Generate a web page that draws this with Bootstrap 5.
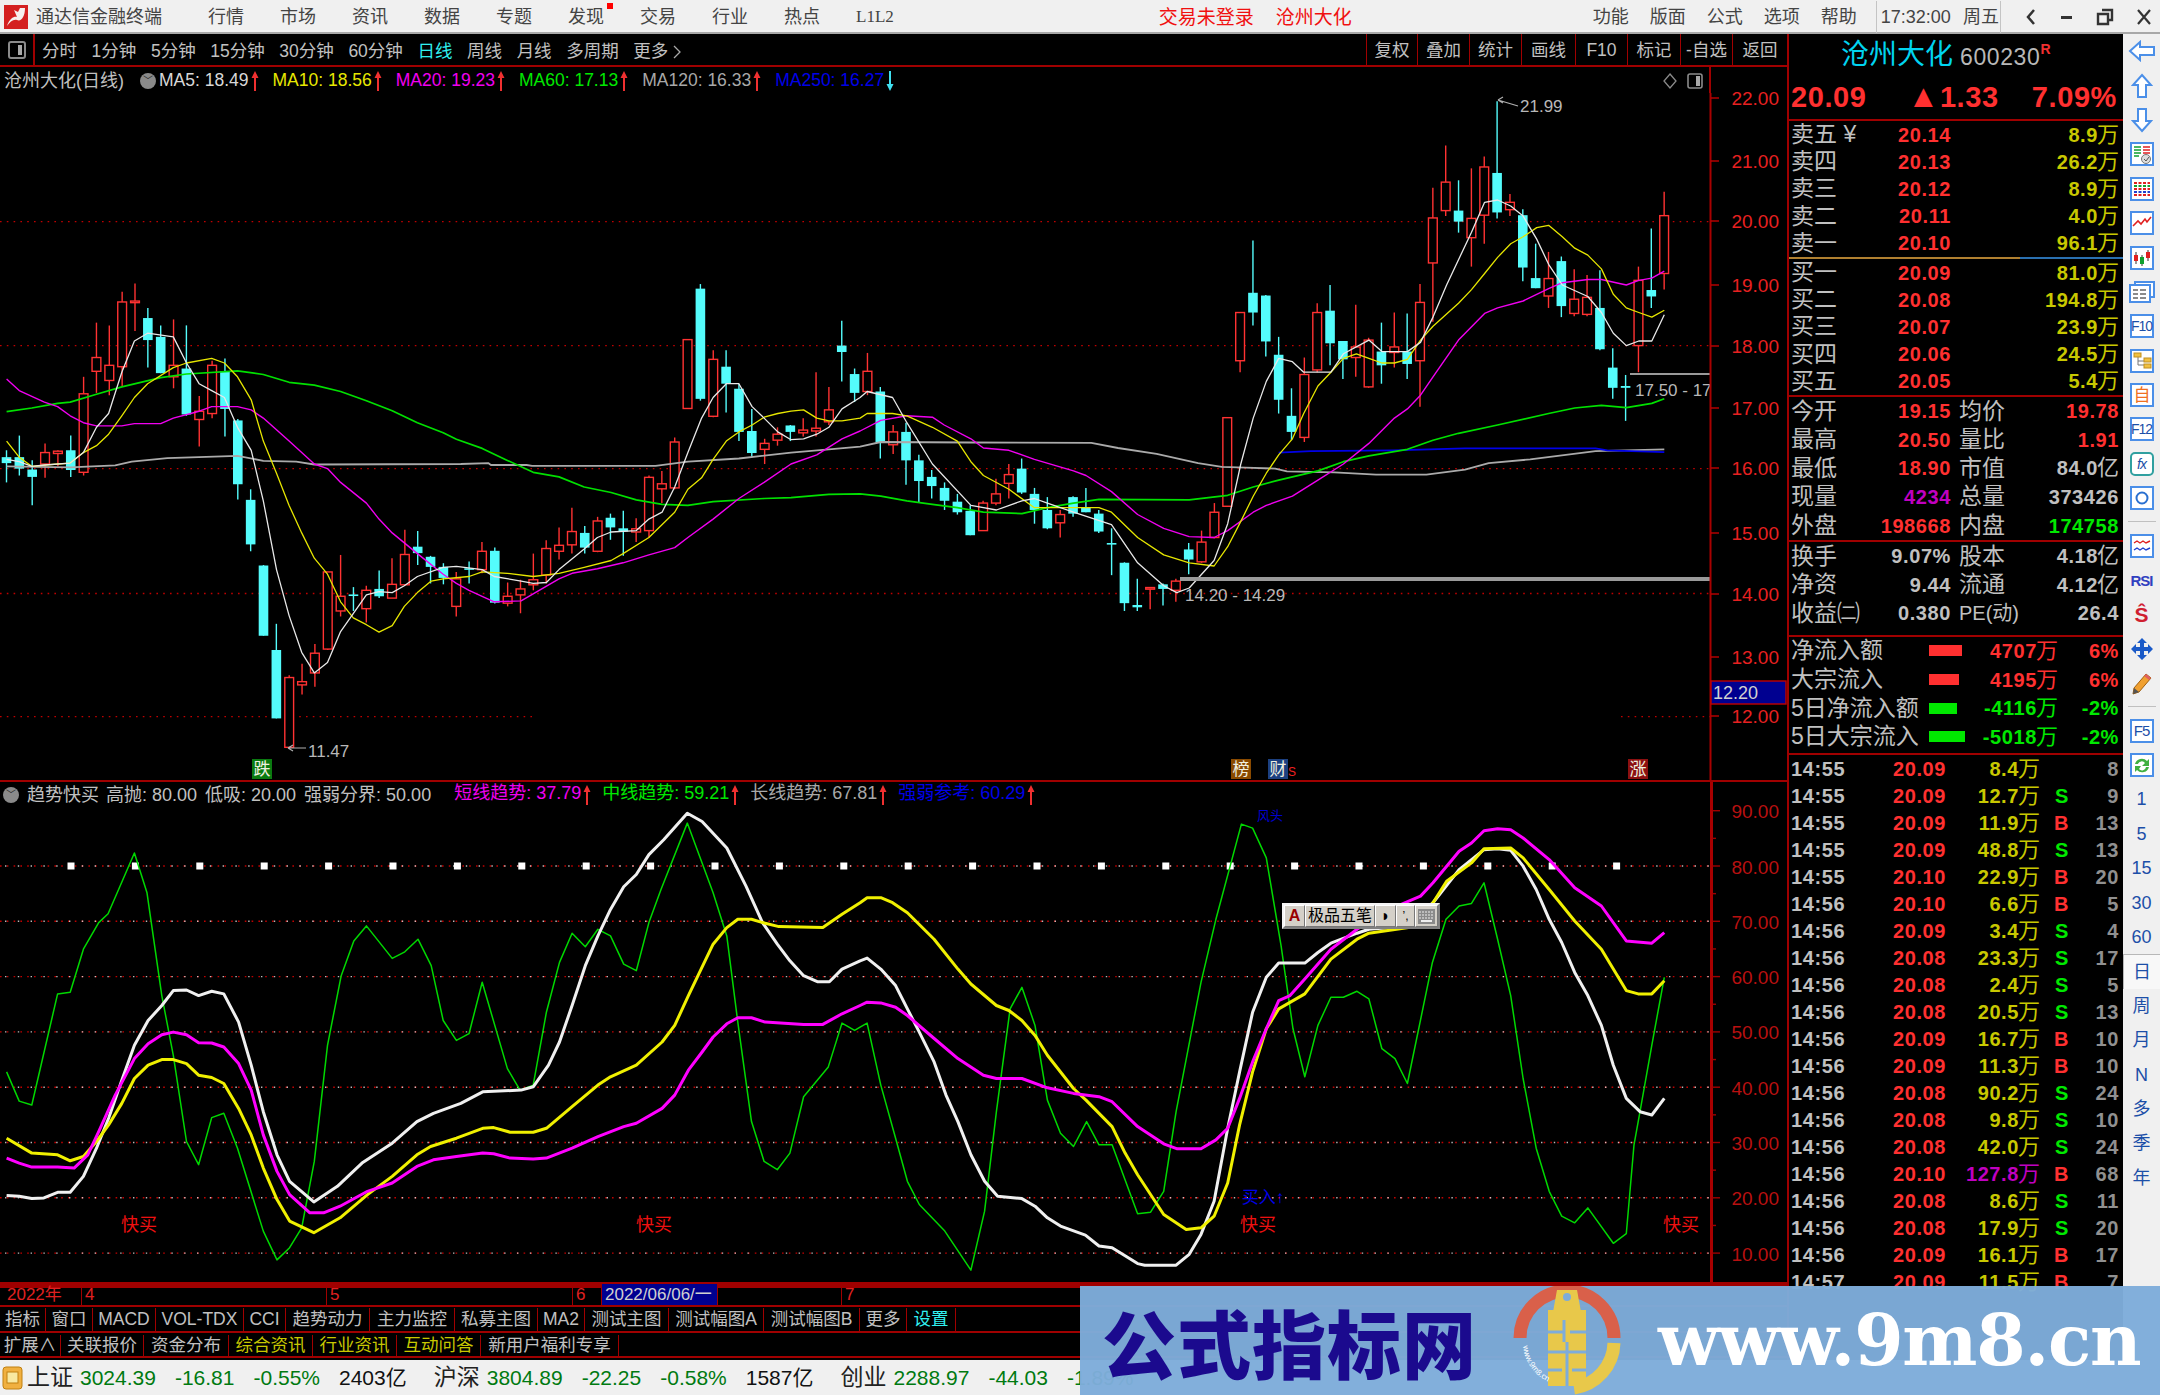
<!DOCTYPE html>
<html lang="zh-CN">
<head>
<meta charset="UTF-8">
<title>通达信金融终端</title>
<link href="https://cdn.jsdelivr.net/npm/bootstrap@5.3.0/dist/css/bootstrap.min.css" rel="stylesheet">
<style>
body { width:2160px; height:1395px; overflow:hidden; background:#000; color:#c0c0c0; font-family:"Liberation Sans","Noto Sans CJK SC",sans-serif; font-size:17px; line-height:1; }
/* title bar */
.title-bar { height:34px; background:#f0f0f0; border-bottom:2px solid #a8a8a8; color:#444; font-size:18px; padding-top:2px; }
.app-logo { margin:0 8px 0 4px; }
.app-name { width:172px; color:#444; white-space:nowrap; }
.menu-group { gap:36px; }
.menu-dot { position:absolute; width:6px; height:6px; background:#f00; top:-5px; right:-9px; }
.menu-l12 { font-family:"Liberation Serif",serif; font-size:17px; }
.login-note { margin-left:265px; color:#f01010; gap:22px; font-size:19px; }
.right-menu { margin-left:241px; gap:21px; }
.clock-box { margin-left:19px; height:32px; padding:0 1px 0 4px; width:125px; border:solid #c4c4c4; border-width:0 1px; gap:12px; font-size:18px; white-space:nowrap; flex:none; }
.win-ctrl { margin-left:23px; gap:22px; }
/* tab rows */
.left-col { width:1787px; }
.tab-row { height:33px; border-bottom:2px solid #a00000; font-size:17.5px; color:#c0c0c0; }
.tab-icon { width:35px; height:31px; border-right:2px solid #a00000; }
.tab-list { gap:14.6px; padding:4px 0 0 7px; }
.tab-on { color:#30f0f0; }
.tab-btn { height:31px; border-left:1px solid #a00000; padding-top:3px; }
.legend-row { height:26px; font-size:17.5px; }
.legend-left { width:1711px; border-right:2px solid #a00000; padding:2px 0 0 4px; height:26px; }
.legend-name { width:121px; white-space:nowrap; font-size:18px; }
.round-tag { width:16px; height:16px; border-radius:50%; background:#8a8a8a; color:#222; font-size:10px; margin:0 3px 0 15px; }
.lg-item { white-space:nowrap; }
.lg-arrow { margin-left:2px; vertical-align:middle; }
.c-white { color:#d8d8d8; } .c-yellow { color:#e8e800; } .c-pink { color:#f000f0; } .c-green { color:#00e800; } .c-gray { color:#a8a8a8; } .c-blue { color:#0000e8; }
.osc-head { height:25px; border-top:2px solid #a00000; font-size:18px; }
.osc-left { width:1713px; height:100%; border-right:3px solid #a80000; padding-top:2px; }
.osc-box { height:477px; }
svg text { font-family:"Liberation Sans","Noto Sans CJK SC",sans-serif; }
.date-row { height:23px; border-top:2px solid #a00000; font-size:17px; color:#e02020; background:linear-gradient(#a00000,#a00000) 0 0/1px 4px repeat-x; background-size:1px 4px; }
.date-cell { border-left:1px solid #a00000; padding-left:3px; height:21px; }
.date-on { background:#000090; color:#d0d0d0; white-space:nowrap; }
.cell-row { height:26px; border-top:2px solid #a00000; font-size:17.5px; color:#c0c0c0; padding-top:1px; }
.cell-row:last-of-type { height:27px; border-bottom:2px solid #a00000; padding-top:2px; }
.cell-item { border-right:1px solid #a00000; white-space:nowrap; height:100%; }
.cell-yel { color:#c8c800; } .cell-cyan { color:#30f0f0; }
/* right panel */
.quote-panel { width:336px; border-left:2px solid #a00000; padding:0 4px 0 2px; overflow:hidden; font-weight:700; font-size:20px; letter-spacing:.6px; }
.q-name-row { height:42px; padding-left:50px; }
.q-name { font-size:28px; color:#00d4f0; font-weight:400; letter-spacing:0; }
.q-code { font-size:23px; color:#b8b8b8; margin-left:7px; font-weight:400; margin-top:4px; }
.q-r { color:#f03030; font-size:14px; margin:-12px 0 0 0; }
.q-price-row { height:43px; font-size:29px; color:#ff3030; padding-right:2px; }
.q-tri { font-size:32px; line-height:0; }
.q-line { height:2px; background:#a00000; margin:0 -4px 0 -2px; flex:none; }
.q-mid { height:2px; margin:0 -4px 0 -2px; background:linear-gradient(90deg,#b08030 0,#b08030 231px,#2a70b0 231px); flex:none; }
.q-label { font-weight:400; font-size:23px; letter-spacing:0; color:#c0c0c0; white-space:nowrap; }
.q-label-pe { font-size:20px; }
.q-wan { font-weight:400; font-size:22px; letter-spacing:0; margin-left:-1px; }
.q-red { color:#ff3030; } .q-yel { color:#c8c800; } .q-grn { color:#00e800; } .q-mag { color:#c000c0; } .q-gry { color:#c0c0c0; }
.order-row { height:27.2px; display:grid; grid-template-columns:160px 1fr; align-items:center; }
.stat-row { height:28.6px; display:grid; grid-template-columns:160px 1fr; column-gap:8px; align-items:center; }
.stat-pad { padding-bottom:7px; }
.flow-pad { padding-bottom:2px; }
.flow-row { height:28.6px; display:grid; grid-template-columns:138px 129px 1fr; align-items:center; }
.flow-bar { height:11px; display:block; }
.tick-row { height:27px; display:grid; grid-template-columns:155px 94px 30px 1fr; align-items:center; flex:none; }
.tick-side { text-align:right; padding-right:1px; }
.tick-cnt { color:#909090; text-align:right; }
/* right toolbar */
.tool-bar { width:37px; background:#f0f0f0; margin-left:0; flex:none; color:#1c4fa8; font-size:18px; }
.tool-item { height:34.4px; flex:none; }
.tool-sep { height:13px; flex:none; }
.tool-sep::after { content:""; display:block; height:1px; background:#c0c0c0; width:28px; margin:6px auto 0; }
.tool-box { width:24px; height:24px; border:2px solid #4b8fe8; background:#fff; font-size:14px; color:#1c4fa8; letter-spacing:-1px; }
.tool-on { background:#f8f8f8; border:solid #b8b8b8; border-width:1px 0 0 1px; }
/* status bar */
.status-bar { height:35px; background:#f0f0f0; font-size:21px; color:#007a10; white-space:nowrap; overflow:hidden; }
.st-name { font-size:23px; color:#222; margin:0 7px 0 8px; }
.st-first { margin-left:2px; }
.st-amt { color:#111; }
.st-num { margin-right:19px; }
/* input method popup and watermark lie over the chart */
.ime-bar { position:absolute; left:1282px; top:98px; width:158px; height:26px; background:#d4d0c8; border:2px solid #f4f4f4; border-right-color:#808080; border-bottom-color:#808080; color:#000; font-size:16px; }
.ime-cell { border:1px solid; border-color:#fff #777 #777 #fff; height:100%; }
.wm-band { position:absolute; left:1080px; top:1286px; width:1080px; height:109px; background:rgba(126,172,218,.97); }
.wm-title { font-size:74px; font-weight:900; color:#1b0a8e; margin-left:22px; white-space:nowrap; letter-spacing:1px; font-family:"Noto Sans CJK SC",sans-serif; width:396px; }
.wm-logo { margin-left:14px; }
.wm-url { font-family:"DejaVu Serif",serif; font-weight:700; font-size:71px; color:#fff; margin-left:36px; white-space:nowrap; letter-spacing:-1.2px; }
</style>
</head>
<body class="position-relative d-flex flex-column">

<div class="title-bar d-flex align-items-center flex-none">
  <svg class="app-logo" width="24" height="24" viewBox="0 0 24 24"><rect width="24" height="24" fill="#d42020"/><path d="M3 21 C6 12 11 11 13 12 L10 5 L14 7 L16 3 L21 3 C21 12 17 17 13 15 C9 14 6 17 3 21Z" fill="#f6f0ee"/></svg>
  <span class="app-name">通达信金融终端</span>
  <div class="d-flex menu-group">
    <span>行情</span><span>市场</span><span>资讯</span><span>数据</span><span>专题</span>
    <span class="position-relative">发现<i class="menu-dot"></i></span>
    <span>交易</span><span>行业</span><span>热点</span><span class="menu-l12">L1L2</span>
  </div>
  <div class="d-flex login-note"><span>交易未登录</span><span>沧州大化</span></div>
  <div class="d-flex right-menu"><span>功能</span><span>版面</span><span>公式</span><span>选项</span><span>帮助</span></div>
  <div class="d-flex align-items-center clock-box"><span>17:32:00</span><span>周五</span></div>
  <div class="d-flex align-items-center win-ctrl">
    <svg width="14" height="20" viewBox="0 0 14 20"><path d="M10 3 L4 10 L10 17" fill="none" stroke="#333" stroke-width="2.5"/></svg>
    <svg width="14" height="20" viewBox="0 0 14 20"><rect x="1" y="9" width="11" height="3" fill="#333"/></svg>
    <svg width="18" height="20" viewBox="0 0 18 20"><path d="M6 3h10v10h-3M2 7h10v10H2z" fill="none" stroke="#333" stroke-width="2.4"/></svg>
    <svg width="16" height="20" viewBox="0 0 16 20"><path d="M2 3 L14 17 M14 3 L2 17" stroke="#333" stroke-width="2.2"/></svg>
  </div>
</div>

<div class="d-flex" style="height:1326px">
  <div class="left-col d-flex flex-column flex-none">
    <div class="tab-row d-flex align-items-center">
      <div class="tab-icon d-flex align-items-center justify-content-center">
        <svg width="18" height="18" viewBox="0 0 18 18"><rect x="1" y="1" width="16" height="16" rx="2" fill="none" stroke="#8a8a8a" stroke-width="2"/><rect x="10" y="4" width="4" height="10" fill="#a8a8a8"/></svg>
      </div>
      <div class="tab-list d-flex">
        <span>分时</span><span>1分钟</span><span>5分钟</span><span>15分钟</span><span>30分钟</span><span>60分钟</span><span class="tab-on">日线</span><span>周线</span><span>月线</span><span>多周期</span>
        <span class="d-flex align-items-center" style="gap:5px">更多<svg width="8" height="14" viewBox="0 0 8 14"><path d="M1 1l6 6-6 6" fill="none" stroke="#a8a8a8" stroke-width="1.3"/></svg></span>
      </div>
      <div class="ms-auto d-flex" id="tabRight"></div>
    </div>
    <div class="legend-row d-flex">
      <div class="legend-left d-flex align-items-center">
        <span class="legend-name">沧州大化(日线)</span>
        <span class="round-tag d-flex align-items-center justify-content-center">﹀</span>
        <div class="d-flex" id="legendMain" style="gap:14px"></div>
        <div class="ms-auto d-flex align-items-center" style="gap:10px;margin-right:6px">
          <svg width="14" height="16" viewBox="0 0 14 16"><path d="M7 1 L13 8 L7 15 L1 8Z" fill="none" stroke="#8a8a8a" stroke-width="1.3"/></svg>
          <svg width="16" height="16" viewBox="0 0 16 16"><rect x="1" y="1" width="14" height="14" rx="2" fill="none" stroke="#8a8a8a" stroke-width="1.6"/><rect x="9" y="3" width="4" height="10" fill="#a8a8a8"/></svg>
        </div>
      </div>
    </div>
    <svg id="priceChart" width="1787" height="687" viewBox="0 93 1787 687" class="d-block flex-none overflow-visible"></svg>
    <div class="osc-head d-flex">
      <div class="osc-left d-flex align-items-center">
        <span class="round-tag d-flex align-items-center justify-content-center" style="margin:0 8px 0 3px">﹀</span>
        <span>趋势快买</span>
        <span style="margin-left:7px">高抛: 80.00</span>
        <span style="margin-left:8px">低吸: 20.00</span>
        <span style="margin-left:8px">强弱分界: 50.00</span>
        <div class="d-flex" id="legendOsc" style="gap:11px;margin-left:23px"></div>
      </div>
    </div>
    <div class="osc-box position-relative flex-none">
      <svg id="oscChart" width="1787" height="477" viewBox="0 805 1787 477" class="d-block overflow-visible"></svg>
      <div class="ime-bar d-flex align-items-stretch">
        <span class="ime-cell d-flex align-items-center justify-content-center" style="width:21px;color:#900;font-weight:700">A</span>
        <span class="ime-cell d-flex align-items-center justify-content-center" style="width:70px;white-space:nowrap">极品五笔</span>
        <span class="ime-cell d-flex align-items-center justify-content-center" style="width:21px">◗</span>
        <span class="ime-cell d-flex align-items-center justify-content-center" style="width:19px;font-size:12px">’,</span>
        <span class="ime-cell d-flex align-items-center justify-content-center flex-grow-1">
          <svg width="17" height="15" viewBox="0 0 17 15"><rect width="17" height="15" fill="#8a8a8a"/><path d="M1 3h15M1 6h15M1 9h15" stroke="#eee" stroke-dasharray="2 1"/><rect x="3" y="11" width="11" height="2" fill="#eee"/></svg>
        </span>
      </div>
    </div>
    <div class="date-row d-flex flex-none" id="dateRow"></div>
    <div class="cell-row d-flex flex-none" id="cellRowA"></div>
    <div class="cell-row d-flex flex-none" id="cellRowB"></div>
  </div>

  <div class="quote-panel d-flex flex-column flex-none">
    <div class="q-name-row d-flex align-items-center"><span class="q-name">沧州大化</span><span class="q-code">600230</span><span class="q-r">R</span></div>
    <div class="q-price-row d-flex align-items-center justify-content-between"><span>20.09</span><span style="margin-left:8px"><span class="q-tri">▲</span>1.33</span><span>7.09%</span></div>
    <div class="q-line"></div>
    <div id="sellRows"></div>
    <div class="q-mid"></div>
    <div id="buyRows"></div>
    <div class="q-line"></div>
    <div id="statRowsA"></div>
    <div class="q-line"></div>
    <div id="statRowsB" class="stat-pad"></div>
    <div class="q-line"></div>
    <div id="flowRows" class="flow-pad"></div>
    <div class="q-line"></div>
    <div id="tickRows" class="d-flex flex-column"></div>
  </div>

  <div class="tool-bar d-flex flex-column align-items-center">
    <div class="tool-item d-flex align-items-center justify-content-center"><svg width="28" height="22" viewBox="0 0 28 22"><path d="M2 11 L12 2 V7 H26 V15 H12 V20Z" fill="#fff" stroke="#4b8fe8" stroke-width="2"/></svg></div>
    <div class="tool-item d-flex align-items-center justify-content-center"><svg width="22" height="26" viewBox="0 0 22 26"><path d="M11 2 L20 12 H15 V24 H7 V12 H2Z" fill="#fff" stroke="#4b8fe8" stroke-width="2"/></svg></div>
    <div class="tool-item d-flex align-items-center justify-content-center"><svg width="22" height="26" viewBox="0 0 22 26"><path d="M11 24 L20 14 H15 V2 H7 V14 H2Z" fill="#fff" stroke="#4b8fe8" stroke-width="2"/></svg></div>
    <div class="tool-item d-flex align-items-center justify-content-center"><svg width="24" height="24" viewBox="0 0 24 24"><rect x="1" y="1" width="22" height="22" fill="#fff" stroke="#4b8fe8" stroke-width="2"/><path d="M4 5h7M4 8h7M4 11h7M4 14h5" stroke="#10a030" stroke-width="1.6"/><path d="M13 5h7M13 8h7M13 11h7" stroke="#e02020" stroke-width="1.6"/><circle cx="16" cy="17" r="4.5" fill="#ddd" stroke="#777"/><path d="M14 17l2 2 3-4" fill="none" stroke="#555"/></svg></div>
    <div class="tool-item d-flex align-items-center justify-content-center"><svg width="24" height="24" viewBox="0 0 24 24"><rect x="1" y="1" width="22" height="22" fill="#fff" stroke="#4b8fe8" stroke-width="2"/><path d="M4 6h16M4 12h16M4 18h16" stroke="#e02020" stroke-width="2" stroke-dasharray="3 1.5"/><path d="M4 9h16" stroke="#10a030" stroke-width="2" stroke-dasharray="3 1.5"/><path d="M4 15h16" stroke="#2040d0" stroke-width="2" stroke-dasharray="3 1.5"/></svg></div>
    <div class="tool-item d-flex align-items-center justify-content-center"><svg width="24" height="24" viewBox="0 0 24 24"><rect x="1" y="1" width="22" height="22" fill="#fff" stroke="#4b8fe8" stroke-width="2"/><path d="M3 15 L8 10 L11 13 L15 8 L17 11 L21 6" fill="none" stroke="#e02020" stroke-width="1.6"/></svg></div>
    <div class="tool-item d-flex align-items-center justify-content-center"><svg width="24" height="24" viewBox="0 0 24 24"><rect x="1" y="1" width="22" height="22" fill="#fff" stroke="#4b8fe8" stroke-width="2"/><path d="M6 6v12M12 9v11M18 4v11" stroke="#333"/><rect x="4" y="9" width="4" height="6" fill="#e02020"/><rect x="10" y="11" width="4" height="7" fill="#10a030"/><rect x="16" y="6" width="4" height="6" fill="#e02020"/></svg></div>
    <div class="tool-item d-flex align-items-center justify-content-center"><svg width="26" height="24" viewBox="0 0 26 24"><path d="M6 5V2h19v15h-4" fill="#fff" stroke="#4b8fe8" stroke-width="2"/><rect x="1" y="5" width="20" height="17" fill="#fff" stroke="#4b8fe8" stroke-width="2"/><path d="M4 10h5M11 10h6M4 14h5M11 14h6M4 18h5M11 18h6" stroke="#666" stroke-width="1.6"/></svg></div>
    <div class="tool-item d-flex align-items-center justify-content-center"><span class="tool-box d-flex align-items-center justify-content-center">F10</span></div>
    <div class="tool-item d-flex align-items-center justify-content-center"><svg width="24" height="24" viewBox="0 0 24 24"><rect x="1" y="1" width="22" height="22" fill="#fff" stroke="#4b8fe8" stroke-width="2"/><path d="M8 8v8h6M8 12h6" fill="none" stroke="#777"/><rect x="4" y="4" width="7" height="4" fill="#f0c040" stroke="#c09020"/><rect x="14" y="9" width="7" height="4" fill="#f0c040" stroke="#c09020"/><rect x="14" y="15" width="7" height="4" fill="#f0c040" stroke="#c09020"/></svg></div>
    <div class="tool-item d-flex align-items-center justify-content-center"><span class="tool-box d-flex align-items-center justify-content-center" style="color:#f07020;font-size:17px">自</span></div>
    <div class="tool-item d-flex align-items-center justify-content-center"><span class="tool-box d-flex align-items-center justify-content-center">F12</span></div>
    <div class="tool-item d-flex align-items-center justify-content-center"><span class="tool-box d-flex align-items-center justify-content-center" style="border-color:#30a0a0;border-radius:5px;font-style:italic">fx</span></div>
    <div class="tool-item d-flex align-items-center justify-content-center"><svg width="24" height="24" viewBox="0 0 24 24"><rect x="1" y="1" width="22" height="22" fill="#fff" stroke="#4b8fe8" stroke-width="2"/><circle cx="12" cy="12" r="5.5" fill="none" stroke="#2a70d0" stroke-width="2"/></svg></div>
    <div class="tool-sep w-100"></div>
    <div class="tool-item d-flex align-items-center justify-content-center"><svg width="24" height="24" viewBox="0 0 24 24"><rect x="1" y="1" width="22" height="22" fill="#fff" stroke="#4b8fe8" stroke-width="2"/><path d="M4 9l3-2 3 2 3-2 3 2 4-2" fill="none" stroke="#e02020" stroke-width="1.4"/><path d="M4 16l3-2 3 2 3-2 3 2 4-2" fill="none" stroke="#2040d0" stroke-width="1.4"/></svg></div>
    <div class="tool-item d-flex align-items-center justify-content-center"><span style="font-weight:700;font-size:15px;color:#3040c0;letter-spacing:-1px">RSI</span></div>
    <div class="tool-item d-flex align-items-center justify-content-center"><span style="font-weight:700;font-size:21px;color:#d02030">Ŝ</span></div>
    <div class="tool-item d-flex align-items-center justify-content-center"><svg width="24" height="24" viewBox="0 0 24 24" fill="#1a5ac8"><path d="M12 1l5 5h-3v4h4V7l5 5-5 5v-3h-4v4h3l-5 5-5-5h3v-4H6v3l-5-5 5-5v3h4V6H7z"/></svg></div>
    <div class="tool-item d-flex align-items-center justify-content-center"><svg width="22" height="24" viewBox="0 0 22 24"><path d="M15 3l5 4L8 21l-6 2 1-6z" fill="#f0a030" stroke="#a06010"/><path d="M15 3l5 4-2 2-5-4z" fill="#e06060"/><path d="M3 17l5 4-6 2z" fill="#555"/></svg></div>
    <div class="tool-sep w-100"></div>
    <div class="tool-item d-flex align-items-center justify-content-center"><span class="tool-box d-flex align-items-center justify-content-center" style="font-size:15px">F5</span></div>
    <div class="tool-item d-flex align-items-center justify-content-center"><svg width="24" height="24" viewBox="0 0 24 24"><rect x="1" y="1" width="22" height="22" fill="#fff" stroke="#4b8fe8" stroke-width="2"/><path d="M5 11a7 7 0 0 1 12-3l2-2v7h-7l3-3a4 4 0 0 0-7 1zM19 14a7 7 0 0 1-12 3l-2 2v-6h6l-2 3a4 4 0 0 0 7-2z" fill="#40b040"/></svg></div>
    <div class="tool-item d-flex align-items-center justify-content-center">1</div>
    <div class="tool-item d-flex align-items-center justify-content-center">5</div>
    <div class="tool-item d-flex align-items-center justify-content-center">15</div>
    <div class="tool-item d-flex align-items-center justify-content-center">30</div>
    <div class="tool-item d-flex align-items-center justify-content-center">60</div>
    <div class="tool-item tool-on d-flex align-items-center justify-content-center w-100">日</div>
    <div class="tool-item d-flex align-items-center justify-content-center">周</div>
    <div class="tool-item d-flex align-items-center justify-content-center">月</div>
    <div class="tool-item d-flex align-items-center justify-content-center">N</div>
    <div class="tool-item d-flex align-items-center justify-content-center">多</div>
    <div class="tool-item d-flex align-items-center justify-content-center">季</div>
    <div class="tool-item d-flex align-items-center justify-content-center">年</div>
  </div>
</div>

<div class="status-bar d-flex align-items-center flex-none">
  <svg width="22" height="24" viewBox="0 0 22 24" style="margin:0 1px 0 2px"><rect x="1" y="1" width="19" height="22" rx="3" fill="#f0b040" stroke="#c08010"/><rect x="5" y="6" width="11" height="11" fill="#f8e8a0" stroke="#c08010"/></svg>
  <span class="st-name st-first">上证</span><span class="st-num">3024.39</span><span class="st-num">-16.81</span><span class="st-num">-0.55%</span><span class="st-amt st-num">2403亿</span>
  <span class="st-name">沪深</span><span class="st-num">3804.89</span><span class="st-num">-22.25</span><span class="st-num">-0.58%</span><span class="st-amt st-num">1587亿</span>
  <span class="st-name">创业</span><span class="st-num">2288.97</span><span class="st-num">-44.03</span><span class="st-num">-1.89%</span>
</div>

<div class="wm-band d-flex align-items-center">
  <span class="wm-title">公式指标网</span>
  <svg class="wm-logo" width="110" height="109" viewBox="0 0 110 109">
    <path d="M8 52 A47 47 0 0 1 102 52" fill="none" stroke="#d9604a" stroke-width="13"/>
    <path d="M102 57 A47 47 0 0 1 62 102" fill="none" stroke="#e8c84a" stroke-width="13"/>
    <rect x="36" y="24" width="38" height="76" fill="#e8c84a"/>
    <path d="M45 4h20l4 22H41z" fill="#e8c84a"/>
    <circle cx="55" cy="11" r="4" fill="#7eacda"/>
    <path d="M36 46h16M58 46h16M52 34v22M36 66h38M55 56v44M36 84h14M60 84h14" stroke="#7eacda" stroke-width="3"/>
    <path id="wmArc" d="M11 60 A45 45 0 0 0 50 100" fill="none"/>
    <text font-size="8" fill="#fff"><textPath href="#wmArc">www.9m8.cn</textPath></text>
  </svg>
  <span class="wm-url">www.9m8.cn</span>
</div>

<script src="https://cdn.jsdelivr.net/npm/bootstrap@5.3.0/dist/js/bootstrap.bundle.min.js"></script>
<script>
// thin arrow drawn after each indicator value
const upArrow = '<svg class="lg-arrow" width="8" height="20" viewBox="0 0 8 20"><path d="M4 0l3.500 7H5V20H3V7H.5z" fill="#f03030"/></svg>';
const downArrow = '<svg class="lg-arrow" width="8" height="20" viewBox="0 0 8 20"><path d="M4 20L.5 13H3V0h2v13h2.500z" fill="#40e0f0"/></svg>';

document.getElementById('tabRight').innerHTML = [['复权',51],['叠加',52],['统计',52],['画线',54],['F10',52],['标记',53],['-自选',52],['返回',55]]
  .map(b => `<span class="tab-btn d-flex align-items-center justify-content-center" style="width:${b[1]}px">${b[0]}</span>`).join('');

document.getElementById('legendMain').innerHTML = [
  ['c-white','MA5: 18.49',1],['c-yellow','MA10: 18.56',1],['c-pink','MA20: 19.23',1],['c-green','MA60: 17.13',1],['c-gray','MA120: 16.33',1],['c-blue','MA250: 16.27',0]
].map(m => `<span class="lg-item ${m[0]}">${m[1]}${m[2] ? upArrow : downArrow}</span>`).join('');

document.getElementById('legendOsc').innerHTML = [
  ['c-pink','短线趋势: 37.79'],['c-green','中线趋势: 59.21'],['c-gray','长线趋势: 67.81'],['c-blue','强弱参考: 60.29']
].map(m => `<span class="lg-item ${m[0]}">${m[1]}${upArrow}</span>`).join('');

document.getElementById('dateRow').innerHTML = [['2022年',81,0],['4',245,1],['5',246,1],['6',29,1],['2022/06/06/一',116,2],['',124,1],['7',900,1]]
  .map(d => `<span class="date-cell d-flex align-items-center ${d[2] === 2 ? 'date-on' : ''}" style="width:${d[1]}px;${d[2] ? '' : 'border-left:0;padding-left:7px'}">${d[0]}</span>`).join('');

const cellHtml = (list, cls) => list.map(c => `<span class="cell-item d-flex align-items-center justify-content-center ${c[2] || ''}" style="width:${c[1]}px">${c[0]}</span>`).join('');
document.getElementById('cellRowA').innerHTML = cellHtml([['指标',46],['窗口',47],['MACD',63],['VOL-TDX',88],['CCI',42],['趋势动力',84],['主力监控',85],['私募主图',83],['MA2',47],['测试主图',84],['测试幅图A',95],['测试幅图B',96],['更多',47],['设置',49,'cell-cyan']]);
document.getElementById('cellRowB').innerHTML = cellHtml([['扩展∧',61],['关联报价',83],['资金分布',85],['综合资讯',84,'cell-yel'],['行业资讯',84,'cell-yel'],['互动问答',84,'cell-yel'],['新用户福利专享',138]]);

// ---------- quote panel ----------
const wan = (v, u, c) => `<span class="${c}">${v}<span class="q-wan">${u}</span></span>`;
const orderRow = r => `<div class="order-row"><div class="d-flex justify-content-between align-items-center"><span class="q-label">${r[0]}</span><span class="q-red">${r[1]}</span></div><div class="text-end">${wan(r[2], '万', 'q-yel')}</div></div>`;
document.getElementById('sellRows').innerHTML = [['卖五 ¥','20.14','8.9'],['卖四','20.13','26.2'],['卖三','20.12','8.9'],['卖二','20.11','4.0'],['卖一','20.10','96.1']].map(orderRow).join('');
document.getElementById('buyRows').innerHTML = [['买一','20.09','81.0'],['买二','20.08','194.8'],['买三','20.07','23.9'],['买四','20.06','24.5'],['买五','20.05','5.4']].map(orderRow).join('');

const statRow = r => `<div class="stat-row"><div class="d-flex justify-content-between align-items-center"><span class="q-label">${r[0]}</span><span class="${r[2]}">${r[1]}</span></div><div class="d-flex justify-content-between align-items-center"><span class="q-label ${r[6] || ''}">${r[3]}</span><span class="${r[5]}">${r[4]}</span></div></div>`;
const yi = v => `${v}<span class="q-wan">亿</span>`;
document.getElementById('statRowsA').innerHTML = [
  ['今开','19.15','q-red','均价','19.78','q-red'],['最高','20.50','q-red','量比','1.91','q-red'],['最低','18.90','q-red','市值',yi('84.0'),'q-gry'],
  ['现量','4234','q-mag','总量','373426','q-gry'],['外盘','198668','q-red','内盘','174758','q-grn']].map(statRow).join('');
document.getElementById('statRowsB').innerHTML = [
  ['换手','9.07%','q-gry','股本',yi('4.18'),'q-gry'],['净资','9.44','q-gry','流通',yi('4.12'),'q-gry'],['收益㈡','0.380','q-gry','PE(动)','26.4','q-gry','q-label-pe']].map(statRow).join('');

document.getElementById('flowRows').innerHTML = [
  ['净流入额',33,'#ff3030','4707','6%','q-red'],['大宗流入',30,'#ff3030','4195','6%','q-red'],['5日净流入额',28,'#00e800','-4116','-2%','q-grn'],['5日大宗流入',36,'#00e800','-5018','-2%','q-grn']
].map(r => `<div class="flow-row"><span class="q-label">${r[0]}</span><div class="d-flex justify-content-between align-items-center"><i class="flow-bar" style="width:${r[1]}px;background:${r[2]}"></i>${wan(r[3], '万', r[5])}</div><div class="text-end ${r[5]}">${r[4]}</div></div>`).join('');

const ticks = [
  ['14:55','20.09','8.4','',8],['14:55','20.09','12.7','S',9],['14:55','20.09','11.9','B',13],['14:55','20.09','48.8','S',13],['14:55','20.10','22.9','B',20],
  ['14:56','20.10','6.6','B',5],['14:56','20.09','3.4','S',4],['14:56','20.08','23.3','S',17],['14:56','20.08','2.4','S',5],['14:56','20.08','20.5','S',13],
  ['14:56','20.09','16.7','B',10],['14:56','20.09','11.3','B',10],['14:56','20.08','90.2','S',24],['14:56','20.08','9.8','S',10],['14:56','20.08','42.0','S',24],
  ['14:56','20.10','127.8','B',68],['14:56','20.08','8.6','S',11],['14:56','20.08','17.9','S',20],['14:56','20.09','16.1','B',17],['14:57','20.09','11.5','B',7]];
document.getElementById('tickRows').innerHTML = ticks.map(t => `<div class="tick-row"><div class="d-flex justify-content-between"><span class="q-gry">${t[0]}</span><span class="q-red">${t[1]}</span></div><div class="text-end">${wan(t[2], '万', parseFloat(t[2]) >= 100 ? 'q-mag' : 'q-yel')}</div><div class="tick-side ${t[3] === 'B' ? 'q-red' : 'q-grn'}">${t[3]}</div><div class="tick-cnt">${t[4]}</div></div>`).join('');

// ---------- chart data (read off the reference) ----------
const k8 = ([x, y]) => [x / 1.823, 60 + y / 2.178];
const k9 = ([x, y]) => [860 + x / 1.686, 60 + y / 2.178];
const o10 = ([x, y]) => [x / 1.823, 780 + y / 3.015];
const o11 = ([x, y]) => [860 + x / 1.686, 780 + y / 3.015];
const pts = (a, f) => a.map(p => f(p).map(v => v.toFixed(1)).join(',')).join(' ');
const pline = (a, fa, b, fb, col, w) => `<polyline points="${pts(a, fa)}${b ? ' ' + pts(b, fb) : ''}" fill="none" stroke="${col}" stroke-width="${w}" stroke-linejoin="round"/>`;

// type(0 red hollow, 1 cyan), high, top, bottom, low
const candles = [
[1,850,865,878,920],[1,818,865,890,905],[1,872,892,908,970],[0,835,855,880,910],[0,850,852,857,885],[1,818,850,893,908],[0,690,727,898,905],[0,572,648,678,725],[0,578,665,698,730],[0,505,527,668,710],
[0,487,525,527,590],[1,540,562,610,670],[1,578,603,682,682],[0,565,665,690,715],[1,578,672,772,775],[0,732,765,783,842],[0,655,665,770,780],[1,650,678,760,820],[1,782,785,924,957],[1,935,958,1055,1070],
[1,1100,1101,1254,1254],[1,1228,1285,1434,1434],[0,1340,1345,1497,1500],[0,1315,1354,1361,1382],[0,1272,1292,1335,1365],[0,1115,1115,1283,1285],[0,1078,1168,1200,1212],[1,1148,1164,1167,1200],[0,1145,1155,1195,1225],[1,1112,1152,1168,1172],
[0,1085,1142,1172,1172],[0,1023,1077,1143,1143],[1,1026,1060,1074,1100],[1,1080,1082,1104,1140],[1,1096,1104,1128,1142],[0,1115,1130,1190,1212],[1,1092,1107,1110,1140],[0,1050,1070,1110,1118],[1,1062,1069,1182,1184],[0,1138,1168,1183,1190],
[0,1132,1152,1165,1205],[0,1075,1132,1143,1155],[0,1046,1064,1122,1140],[0,1018,1057,1070,1088],[0,975,1027,1056,1075],[1,1015,1030,1062,1075],[0,995,1004,1070,1072],[1,988,997,1018,1045],[1,982,1020,1027,1080],[0,998,1021,1028,1050],
[0,905,909,1025,1040],[0,895,923,934,965],[0,822,832,932,935],[0,608,609,759,760],[1,488,498,738,742],[0,632,652,776,778],[1,632,668,705,768],[1,705,716,810,830],[1,760,808,856,865],[0,825,835,848,880],
[0,800,815,828,840],[1,795,796,810,830],[0,780,806,812,820],[0,680,802,808,820],[0,712,762,788,795],[1,568,622,636,700],[1,672,684,725,745],
[0,638,678,722,730],[1,712,722,833,868],[0,795,810,838,858],[1,790,810,872,925],[1,860,872,917,965],[1,893,908,928,955],[1,920,932,960,980],[1,945,962,985,990],[1,970,982,1035,1035],[0,960,965,1025,1025],
[0,912,945,965,970],[0,880,903,922,955],[1,868,890,942,945],[1,932,945,980,1010],[1,952,980,1020,1022],[0,980,990,1008,1040],[1,950,952,988,995],[1,932,975,985,985],[1,980,988,1027,1030],[1,1020,1052,1054,1122],
[1,1094,1095,1183,1200],[1,1130,1187,1192,1200],[0,1148,1149,1152,1196],[1,1140,1142,1152,1188],[0,1130,1135,1155,1180],[1,1052,1066,1088,1120],[0,1025,1050,1093,1095],[0,965,985,1040,1042],[0,778,779,972,972],[0,550,550,655,680],
[1,393,507,550,578],[1,512,513,613,646],[1,603,642,740,770],[1,715,775,810,828],[0,648,685,822,832],[0,530,550,675,680],[1,490,546,617,665],[1,612,612,652,695],[0,533,625,648,690],[0,605,610,712,714],
[1,572,635,665,705],[0,550,625,637,670],[1,552,635,662,695],[0,488,528,655,755],[0,278,344,442,570],[0,186,266,328,340],[1,262,328,352,376],[0,236,345,387,450],[0,210,233,338,400],[1,90,246,332,345],
[0,292,310,326,340],[1,325,338,452,482],[1,400,475,497,497],[0,418,476,514,540],[1,428,438,536,560],[0,456,521,552,558],[0,468,517,554,558],[1,458,540,630,632],[1,628,670,714,738],[1,686,710,714,786],
[0,450,480,622,680],[1,367,501,515,540],[0,287,339,465,500]];

const ma5a = [[12,870],[35,875],[58,885],[81,882],[128,878],[152,855],[176,800],[198,770],[222,680],[245,612],[269,595],[316,603],[340,660],[363,705],[386,720],[409,735],[433,800],[458,850],[480,960],[504,1110],[527,1210],[550,1290],[573,1335],[597,1312],[621,1245],[668,1165],[691,1158],[715,1160],[737,1145],[761,1125],[808,1105],[832,1103],[879,1110],[901,1125],[950,1135],[972,1140],[996,1138],[1019,1110],[1065,1065],[1089,1040],[1114,1028],[1160,1025],[1183,1000],[1207,985],[1230,930],[1254,855],[1279,780],[1300,735],[1324,705],[1347,705],[1371,755],[1393,780],[1418,810],[1442,827],[1465,825],[1489,815],[1511,800],[1535,760],[1568,735]];
const ma5b = [[12,722],[55,735],[79,790],[122,880],[187,970],[230,980],[273,960],[294,955],[316,965],[360,985],[424,1012],[468,1095],[512,1145],[534,1160],[555,1150],[597,1090],[620,1010],[642,880],[663,780],[685,700],[706,650],[729,657],[748,680],[794,680],[815,640],[858,610],[880,635],[923,635],[945,615],[966,560],[989,490],[1031,375],[1053,310],[1075,305],[1097,318],[1118,340],[1141,390],[1161,445],[1184,490],[1227,515],[1250,550],[1270,595],[1292,622],[1313,612],[1335,612],[1356,555]];
const ma10a = [[12,830],[35,865],[58,885],[105,880],[128,878],[152,855],[176,840],[198,815],[222,775],[245,735],[269,705],[316,670],[340,660],[386,650],[409,660],[433,690],[458,740],[480,830],[504,900],[527,970],[550,1030],[573,1085],[597,1120],[621,1180],[644,1215],[668,1230],[691,1246],[715,1232],[737,1190],[761,1160],[786,1135],[808,1130],[855,1125],[879,1115],[925,1118],[972,1125],[1019,1118],[1065,1105],[1114,1090],[1136,1075],[1183,1040],[1230,985],[1254,935],[1279,910],[1300,870],[1324,830],[1347,810],[1371,795],[1393,778],[1418,770],[1442,765],[1465,762],[1489,780],[1511,786],[1535,786],[1568,780]];
const ma10b = [[12,770],[55,770],[79,775],[122,800],[164,830],[187,875],[208,905],[251,935],[294,975],[403,975],[424,985],[468,1040],[512,1078],[555,1095],[597,1102],[620,1060],[642,1005],[663,950],[685,900],[706,860],[729,825],[748,770],[772,710],[794,680],[815,650],[837,640],[858,650],[880,660],[901,660],[923,652],[945,610],[966,580],[1009,530],[1031,500],[1053,465],[1075,430],[1097,400],[1118,385],[1141,365],[1161,360],[1184,385],[1205,410],[1227,425],[1250,455],[1270,510],[1292,540],[1313,550],[1335,560],[1356,545]];
const ma20a = [[12,695],[35,720],[81,745],[105,755],[128,775],[152,790],[176,797],[222,797],[245,792],[293,792],[316,780],[363,765],[386,755],[433,755],[458,762],[480,780],[527,830],[573,880],[597,890],[621,920],[668,965],[691,1000],[715,1030],[761,1075],[808,1120],[832,1140],[855,1155],[901,1180],[950,1178],[1019,1130],[1043,1118],[1089,1108],[1136,1095],[1183,1078],[1230,1062],[1254,1040],[1300,1000],[1347,955],[1393,920],[1442,880],[1489,860],[1535,825],[1568,808]];
const ma20b = [[35,785],[79,775],[122,778],[142,795],[187,825],[208,845],[251,850],[294,870],[360,895],[381,905],[424,940],[468,990],[512,1020],[555,1038],[597,1040],[620,1025],[663,985],[685,970],[729,950],[772,915],[815,880],[858,835],[901,780],[923,760],[945,730],[966,690],[1009,610],[1053,552],[1075,540],[1118,525],[1161,498],[1184,485],[1227,478],[1250,478],[1292,490],[1313,480],[1335,475],[1356,460]];
const ma60a = [[12,766],[58,758],[105,748],[128,745],[176,728],[222,712],[293,692],[340,684],[433,677],[480,685],[527,702],[573,708],[621,722],[668,742],[715,764],[761,790],[808,812],[832,826],[879,846],[925,872],[972,898],[1019,908],[1065,930],[1114,942],[1160,958],[1207,968],[1254,970],[1300,962],[1393,955],[1442,953],[1511,946],[1568,945]];
const ma60b = [[35,950],[79,960],[122,968],[164,975],[208,985],[273,988],[316,975],[360,965],[403,957],[555,958],[620,948],[663,930],[706,915],[772,895],[815,875],[858,862],[923,848],[966,828],[1009,813],[1075,795],[1161,770],[1205,758],[1250,752],[1292,757],[1335,748],[1356,738]];
const ma120a = [[12,885],[128,887],[210,883],[240,875],[305,867],[433,862],[480,873],[540,875],[573,881],[840,880],[890,878],[895,882],[960,882],[970,884],[1195,884],[1254,875],[1347,868],[1442,855],[1511,848],[1568,842]];
const ma120b = [[35,832],[185,833],[390,834],[435,845],[500,858],[570,878],[610,886],[650,888],[700,890],[720,896],[800,898],[870,903],[955,903],[1020,892],[1060,878],[1130,870],[1240,852],[1356,848]];
const ma250 = [[706,855],[760,852],[900,850],[1020,846],[1240,846],[1260,850],[1356,854]];

const gA = [[12,880],[35,968],[58,980],[105,645],[128,640],[152,510],[180,430],[197,403],[245,220],[268,340],[295,650],[316,830],[340,1090],[362,1160],[386,1018],[408,1005],[433,1110],[480,1360],[505,1447],[528,1410],[550,1350],[573,1150],[597,800],[622,590],[645,485],[668,440],[715,538],[738,518],[762,480],[786,560],[808,725],[832,785],[855,765],[879,610],[925,870],[948,935],[972,920],[996,700],[1020,550],[1043,462],[1067,503],[1090,450],[1113,470],[1137,555],[1160,575],[1183,430],[1205,330],[1253,130],[1300,340],[1325,470],[1345,730],[1370,1030],[1393,1150],[1417,1175],[1440,1125],[1465,955],[1510,865],[1535,733],[1558,755],[1568,745]];
const gB = [[12,733],[35,920],[60,1080],[80,1210],[100,1280],[143,1360],[187,1478],[210,1300],[230,1000],[253,690],[273,625],[295,740],[316,965],[338,1065],[360,1105],[382,1030],[403,1100],[425,1100],[468,1308],[490,1303],[512,1240],[533,1000],[575,610],[600,420],[643,133],[662,145],[685,235],[710,500],[730,750],[750,895],[772,740],[794,655],[815,655],[838,637],[858,660],[880,810],[902,840],[923,915],[965,550],[988,420],[1010,380],[1031,372],[1052,310],[1075,480],[1097,650],[1118,900],[1140,1110],[1162,1240],[1183,1315],[1205,1335],[1227,1290],[1270,1397],[1292,1368],[1305,1100],[1315,1000],[1335,800],[1356,595]];
const wA = [[12,1253],[35,1255],[58,1262],[80,1260],[105,1243],[128,1243],[152,1195],[176,1110],[198,1020],[222,905],[245,800],[270,725],[295,680],[316,635],[340,633],[362,650],[386,637],[408,645],[435,730],[458,860],[480,1000],[505,1130],[528,1210],[572,1272],[615,1225],[660,1155],[715,1095],[760,1030],[790,1005],[840,975],[880,940],[950,935],[972,925],[1000,860],[1020,790],[1043,680],[1067,560],[1090,470],[1113,390],[1137,322],[1160,285],[1183,225],[1210,180],[1253,100],[1280,125],[1325,205],[1360,320],[1390,430],[1417,495],[1440,545],[1465,590],[1490,608],[1512,608],[1535,570],[1568,545]];
const wB = [[12,537],[35,570],[60,620],[80,690],[100,760],[125,850],[145,950],[165,1030],[187,1130],[210,1210],[232,1255],[273,1262],[295,1285],[316,1320],[338,1345],[380,1372],[403,1405],[425,1410],[468,1458],[480,1463],[533,1463],[555,1430],[575,1370],[597,1270],[620,1050],[640,880],[662,700],[685,595],[706,552],[750,552],[772,520],[794,492],[838,462],[858,450],[925,440],[966,370],[1010,270],[1052,210],[1075,207],[1097,212],[1118,260],[1140,330],[1162,420],[1183,490],[1205,580],[1227,650],[1250,740],[1270,860],[1292,960],[1315,1000],[1335,1010],[1356,960]];
const mA = [[12,1140],[35,1155],[58,1167],[105,1167],[135,1170],[160,1130],[180,1060],[210,950],[245,840],[270,795],[295,768],[316,760],[340,768],[362,792],[386,793],[408,805],[435,855],[458,935],[480,1070],[505,1180],[528,1250],[565,1305],[590,1305],[620,1285],[670,1240],[715,1215],[760,1165],[790,1145],[832,1135],[880,1125],[900,1127],[930,1140],[972,1143],[996,1140],[1043,1110],[1090,1075],[1137,1045],[1160,1035],[1207,990],[1230,950],[1255,875],[1280,820],[1300,775],[1325,735],[1345,717],[1370,717],[1395,730],[1465,737],[1500,737],[1535,705],[1568,680]];
const mB = [[12,670],[35,672],[60,685],[80,710],[122,775],[165,840],[208,890],[230,900],[273,900],[316,928],[360,945],[403,955],[425,970],[468,1045],[512,1097],[535,1112],[575,1112],[600,1085],[620,1050],[640,960],[662,850],[685,750],[706,665],[725,650],[750,600],[794,510],[838,450],[880,400],[945,350],[966,310],[1010,215],[1031,190],[1052,153],[1075,147],[1097,150],[1118,175],[1162,240],[1205,325],[1250,380],[1292,485],[1335,492],[1356,460]];
const yA = [[12,1080],[58,1125],[105,1130],[128,1148],[152,1135],[176,1090],[198,1040],[222,975],[245,900],[270,860],[295,843],[316,843],[340,855],[362,890],[386,897],[408,915],[435,990],[458,1070],[480,1170],[505,1265],[528,1330],[572,1365],[620,1320],[670,1250],[715,1195],[760,1130],[785,1105],[832,1080],[880,1050],[900,1048],[930,1062],[972,1062],[996,1050],[1043,985],[1090,920],[1113,895],[1160,860],[1207,790],[1230,740],[1255,650],[1300,495],[1325,445],[1345,420],[1370,420],[1395,432],[1420,442],[1500,445],[1535,405],[1568,370]];
const yB = [[12,355],[35,355],[55,370],[80,400],[125,480],[165,570],[187,615],[230,680],[251,695],[273,725],[295,770],[316,830],[360,930],[381,965],[425,1045],[447,1125],[468,1190],[512,1310],[550,1355],[575,1350],[597,1315],[620,1215],[640,1040],[662,880],[685,750],[706,690],[750,645],[794,540],[838,480],[858,462],[925,445],[966,370],[989,305],[1031,250],[1052,207],[1097,205],[1118,235],[1162,330],[1205,425],[1250,510],[1292,635],[1312,645],[1335,645],[1356,605]];

// ---------- price chart ----------
const RED = '#a80000';
const label = (x, y, t, col, size, anchor) => `<text x="${x}" y="${y}" fill="${col}" font-size="${size}" dominant-baseline="central"${anchor ? ` text-anchor="${anchor}"` : ''}>${t}</text>`;
let s = '';
[[221.6,0,1710],[345.6,0,1710],[468.6,0,1710],[593.5,0,1710],[716.6,0,537],[716.6,1621,1710]].forEach(l => {
  s += `<line x1="${l[1]}" x2="${l[2]}" y1="${l[0]}" y2="${l[0]}" stroke="#c00000" stroke-width="1.4" stroke-dasharray="1.6 5.2"/>`;
});
candles.forEach((c, i) => {
  const x = 6.5 + 12.85 * i, [hi, top, bot, lo] = c.slice(1).map(v => 60 + v / 2.178);
  const col = c[0] ? '#54fcfc' : '#ff3232', h = Math.max(bot - top, 1.6);
  s += `<line x1="${x}" x2="${x}" y1="${hi}" y2="${lo}" stroke="${col}" stroke-width="1.4"/>`;
  s += c[0] ? `<rect x="${x - 4.8}" y="${top}" width="9.6" height="${h}" fill="${col}"/>`
            : `<rect x="${x - 4.4}" y="${top}" width="8.8" height="${h}" fill="#000" stroke="${col}" stroke-width="1.4"/>`;
});
s += pline(ma120a, k8, ma120b, k9, '#aaaaaa', 1.8);
s += pline(ma250, k9, null, null, '#0000e8', 1.8);
s += pline(ma60a, k8, ma60b, k9, '#00e000', 1.7);
s += pline(ma20a, k8, ma20b, k9, '#f000f0', 1.4);
s += pline(ma10a, k8, ma10b, k9, '#e6e600', 1.3);
s += pline(ma5a, k8, ma5b, k9, '#e8e8e8', 1.3);
// pressure and support bars, price notes
s += `<rect x="1180" y="577" width="530" height="4" fill="#9a9a9a"/><rect x="1630" y="373" width="80" height="2" fill="#9a9a9a"/>`;
s += `<path d="M1498 100l20 6M1498 100l5-3M1498 100l5 3" stroke="#b0b0b0" stroke-width="1.2" fill="none"/>` + label(1520, 106, '21.99', '#b8b8b8', 17);
s += `<path d="M288 748h18M288 748l5-3M288 748l5 3" stroke="#b0b0b0" stroke-width="1.2" fill="none"/>` + label(308, 751, '11.47', '#b8b8b8', 17);
s += label(1185, 595, '14.20 - 14.29', '#b8b8b8', 17) + label(1635, 390, '17.50 - 17.62', '#b8b8b8', 17);
// event tags
[[252,'跌','#0a7a10'],[1231,'榜','#8a4a00'],[1268,'财','#1c4080'],[1628,'涨','#8c1010']].forEach(t => {
  s += `<rect x="${t[0]}" y="759" width="20" height="20" fill="${t[2]}"/>` + label(t[0] + 10, 769, t[1], '#f0f0e0', 17, 'middle');
});
s += label(1288, 772, 'S', '#f02020', 12);
// price axis
s += `<rect x="1711" y="93" width="76" height="687" fill="#000"/><line x1="1710.5" x2="1710.5" y1="93" y2="780" stroke="${RED}" stroke-width="2"/>`;
[[98,'22.00'],[161,'21.00'],[221,'20.00'],[285,'19.00'],[346,'18.00'],[408,'17.00'],[468,'16.00'],[533,'15.00'],[594,'14.00'],[657,'13.00'],[716,'12.00']].forEach(t => {
  s += `<line x1="1711" x2="1719" y1="${t[0]}" y2="${t[0]}" stroke="#c00000" stroke-width="1.4"/>` + label(1779, t[0], t[1], '#e82020', 19, 'end');
});
s += `<rect x="1711" y="681" width="75" height="23" fill="#000090" stroke="#c00000" stroke-width="1.4"/>` + label(1713, 692.5, '12.20', '#d0d0d0', 18);
document.getElementById('priceChart').innerHTML = s;

// ---------- oscillator ----------
const lv = v => 866 + (80 - v) * 5.53;
let o = '';
[10,20,30,40,50,60,70,80].forEach(v => {
  o += `<line x1="0" x2="1710" y1="${lv(v)}" y2="${lv(v)}" stroke="#c00000" stroke-width="1.4" stroke-dasharray="1.6 5.2"/>`;
  o += `<line x1="5" x2="1710" y1="${lv(v)}" y2="${lv(v)}" stroke="#e8e8e8" stroke-width="1.4" stroke-dasharray="1.4 11.4" opacity=".8"/>`;
});
for (let k = 0; k < 25; k++) o += `<rect x="${67.5 + 64.4 * k}" y="862.5" width="7" height="7" fill="#fff"/>`;
o += pline(gA, o10, gB, o11, '#00d800', 1.5);
o += pline(wA, o10, wB, o11, '#f0f0f0', 3);
o += pline(yA, o10, yB, o11, '#f0f000', 3);
o += pline(mA, o10, mB, o11, '#ff00ff', 3);
[[139,'快买'],[654,'快买'],[1258,'快买'],[1681,'快买']].forEach(t => { o += label(t[0], 1225, t[1], '#ee1010', 18, 'middle'); });
o += label(1263, 1197, '买入↑', '#0000e8', 17, 'middle') + label(1270, 815, '风头', '#0000d0', 13, 'middle');
o += `<rect x="1711" y="805" width="76" height="477" fill="#000"/><line x1="1711.5" x2="1711.5" y1="805" y2="1282" stroke="${RED}" stroke-width="3"/>`;
for (let v = 10; v <= 90; v += 5) o += `<line x1="1712" x2="${v % 10 ? 1716 : 1720}" y1="${lv(v)}" y2="${lv(v)}" stroke="#a00000" stroke-width="1.4"/>`;
[90,80,70,60,50,40,30,20,10].forEach(v => { o += label(1779, lv(v) + 1, v + '.00', '#b81010', 19, 'end'); });
document.getElementById('oscChart').innerHTML = o;
</script>
</body>
</html>
